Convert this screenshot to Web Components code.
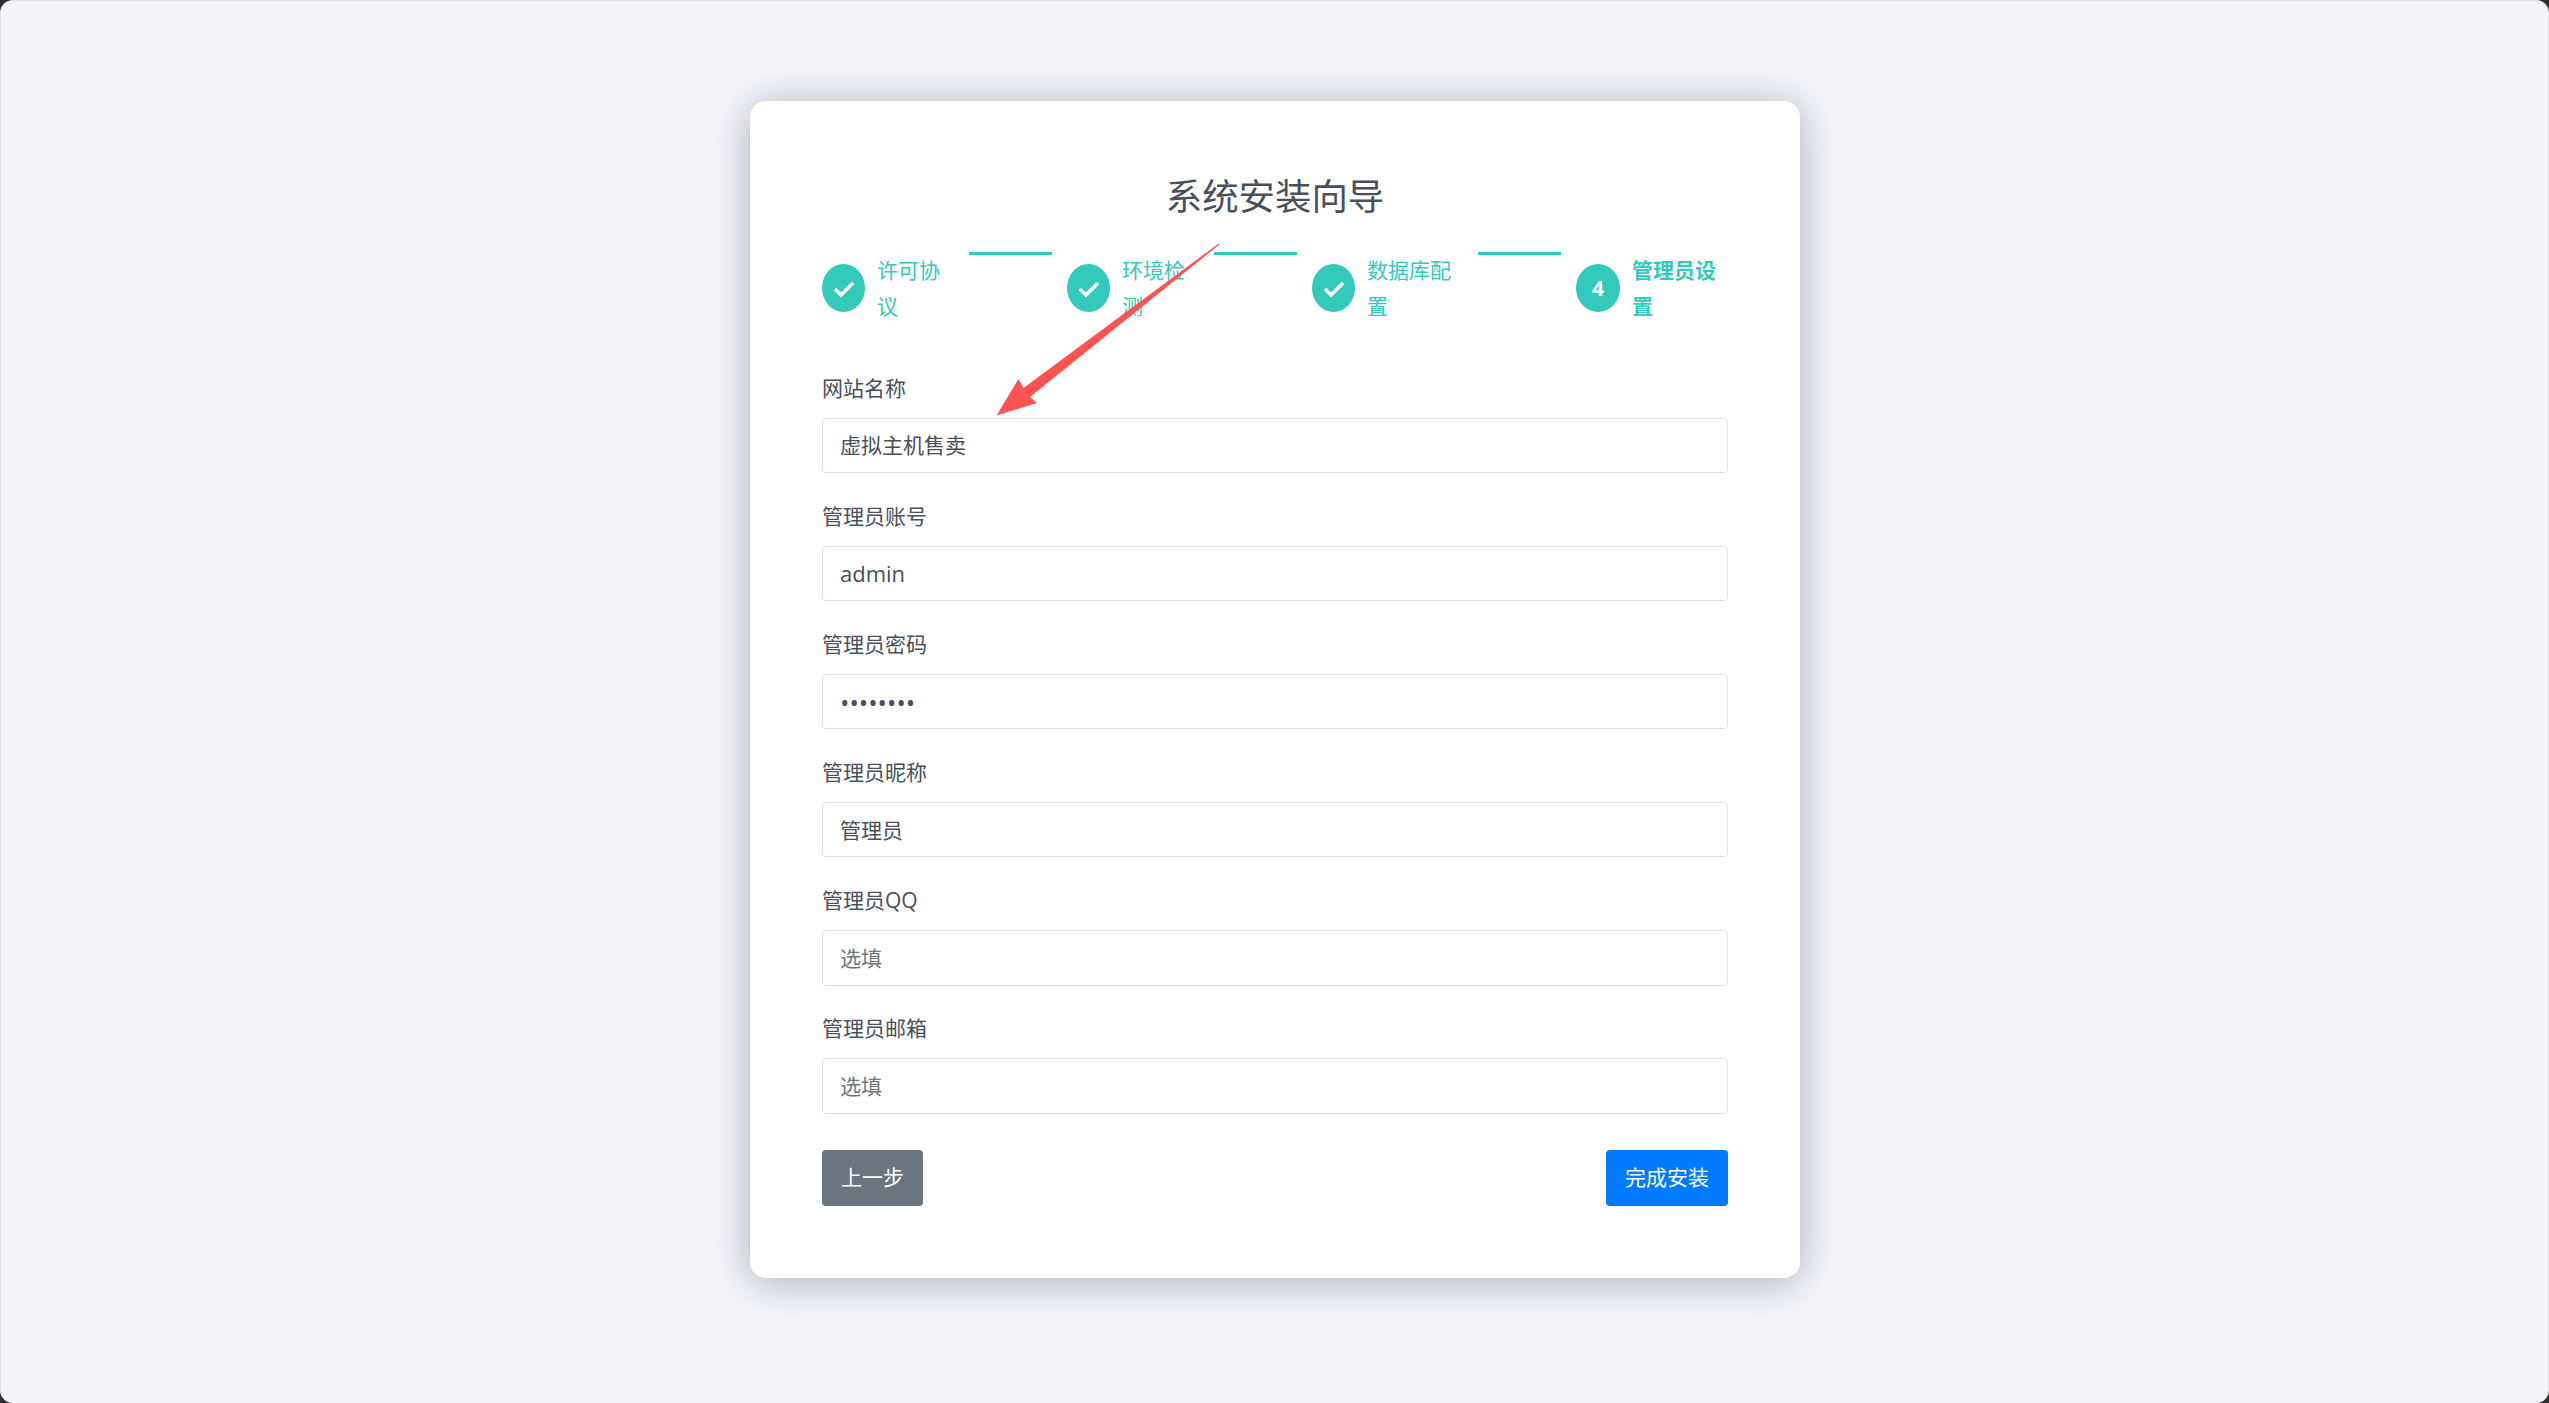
<!DOCTYPE html>
<html lang="zh-CN">
<head>
<meta charset="utf-8">
<title>系统安装向导</title>
<style>
  html, body { margin: 0; padding: 0; height: 100%; background: #2f2f2f; overflow: hidden; }
  body { font-family: "Open Sans", "Noto Sans CJK SC", sans-serif; color: #495057; }
</style>
</head>
<body>
<install-page>
  <wizard-card heading="系统安装向导">
    <wizard-steps>
      <wizard-step done text-width="70">许可协议</wizard-step>
      <wizard-link></wizard-link>
      <wizard-step done text-width="70">环境检测</wizard-step>
      <wizard-link></wizard-link>
      <wizard-step done text-width="91" style="flex-basis:166px">数据库配置</wizard-step>
      <wizard-link></wizard-link>
      <wizard-step number="4" text-width="91" style="flex-basis:152px">管理员设置</wizard-step>
    </wizard-steps>
    <form-field label="网站名称">虚拟主机售卖</form-field>
    <form-field label="管理员账号" kind="latin">admin</form-field>
    <form-field label="管理员密码" kind="password">••••••••</form-field>
    <form-field label="管理员昵称">管理员</form-field>
    <form-field label="管理员QQ" kind="placeholder">选填</form-field>
    <form-field label="管理员邮箱" kind="placeholder">选填</form-field>
    <wizard-actions>
      <action-button tone="secondary" style="width:101px">上一步</action-button>
      <action-button tone="primary" style="width:122px">完成安装</action-button>
    </wizard-actions>
  </wizard-card>
  <annotation-arrow></annotation-arrow>
</install-page>

<script>
  const shadow = (el, html) => { el.attachShadow({ mode: 'open' }).innerHTML = html; };

  class InstallPage extends HTMLElement {
    constructor() {
      super();
      shadow(this, `<style>
        :host { display: flex; justify-content: center; align-items: flex-start; position: relative;
          box-sizing: border-box; width: 100%; height: 100vh; padding: 100px 0 0 0;
          background: #f3f5fa; border: 1px solid #e1e3e9; border-bottom: 0; border-radius: 13px; }
      </style><slot></slot>`);
    }
  }

  class WizardCard extends HTMLElement {
    constructor() {
      super();
      shadow(this, `<style>
        :host { display: block; box-sizing: border-box; width: 1050px; height: 1177px; margin-left: 1px;
          padding: 70px 72px 72px; background: #fff; border-radius: 16px;
          box-shadow: 0 4px 42px rgba(20, 24, 40, .32); }
        h1 { margin: 0 0 31px; font-size: 36.4px; line-height: 50px; font-weight: 400; text-align: center; color: #495057; }
      </style><h1>${this.getAttribute('heading')}</h1><slot></slot>`);
    }
  }

  class WizardSteps extends HTMLElement {
    constructor() {
      super();
      shadow(this, `<style>
        :host { display: flex; align-items: flex-start; margin-bottom: 47.5px; }
      </style><slot></slot>`);
    }
  }

  class WizardStep extends HTMLElement {
    constructor() {
      super();
      const done = this.hasAttribute('done');
      const num = this.getAttribute('number');
      const w = this.getAttribute('text-width');
      const mark = done
        ? `<svg width="43" height="48" viewBox="0 0 43 48" aria-hidden="true"><polyline points="13,25 19,31 31,19" fill="none" stroke="#fff" stroke-width="3.6"/></svg>`
        : `<b>${num}</b>`;
      shadow(this, `<style>
        :host { display: flex; flex: 0 0 147px; align-items: center; gap: 12px; box-sizing: border-box; color: #33cabb; }
        .dot { flex: 0 0 ${done ? 43 : 44}px; height: 48px; border-radius: 50%; background: #33cabb; color: #fff;
          display: flex; align-items: center; justify-content: center; }
        .dot svg { display: block; }
        .dot b { font-size: 21px; font-weight: 700; }
        .text { width: ${w}px; font-size: 21px; line-height: 36px; font-weight: ${done ? 400 : 700}; }
      </style><span class="dot">${mark}</span><span class="text"><slot></slot></span>`);
    }
  }

  class WizardLink extends HTMLElement {
    constructor() {
      super();
      shadow(this, `<style>
        :host { display: block; flex: 0 0 83px; height: 3px; margin-right: 15px; background: #33cabb; }
      </style>`);
    }
  }

  class FormField extends HTMLElement {
    constructor() {
      super();
      const kind = this.getAttribute('kind') || 'text';
      shadow(this, `<style>
        :host { display: block; margin-bottom: 26.8px; }
        label { display: block; font-size: 21px; line-height: 33px; margin: 0 0 13px; color: #495057; }
        .box { box-sizing: border-box; height: 55.4px; padding: 0 17px 2px; display: flex; align-items: center;
          border: 1.5px solid #e0e1e7; border-radius: 4px; background: #fff; font-size: 21px; color: #495057; }
        .placeholder { color: #6c757d; }
        .latin { font-size: 22px; padding-bottom: 0; }
        .password { font-size: 25px; padding-bottom: 0; }
      </style><label>${this.getAttribute('label')}</label>
      <div class="box ${kind}" role="textbox"><slot></slot></div>`);
    }
  }

  class WizardActions extends HTMLElement {
    constructor() {
      super();
      shadow(this, `<style>
        :host { display: flex; justify-content: space-between; margin-top: 36.1px; }
      </style><slot></slot>`);
    }
  }

  class ActionButton extends HTMLElement {
    constructor() {
      super();
      const bg = this.getAttribute('tone') === 'primary' ? '#007bff' : '#6c757d';
      shadow(this, `<style>
        :host { display: flex; align-items: center; justify-content: center; box-sizing: border-box; height: 56px;
          padding-bottom: 4px; border-radius: 4px; background: ${bg}; color: #fff; font-size: 21px; }
      </style><slot></slot>`);
    }
  }

  class AnnotationArrow extends HTMLElement {
    constructor() {
      super();
      shadow(this, `<style>
        :host { position: absolute; left: -1px; top: -1px; width: 2549px; height: 1403px; pointer-events: none; }
        svg { display: block; }
      </style><svg width="2549" height="1403" viewBox="0 0 2549 1403" aria-hidden="true">
        <polygon fill="#ff5353" points="1220,244 1030,397 1037,403 996.5,415.5 1018.5,379 1023.5,388 1218,244"/>
      </svg>`);
    }
  }

  customElements.define('install-page', InstallPage);
  customElements.define('wizard-card', WizardCard);
  customElements.define('wizard-steps', WizardSteps);
  customElements.define('wizard-step', WizardStep);
  customElements.define('wizard-link', WizardLink);
  customElements.define('form-field', FormField);
  customElements.define('wizard-actions', WizardActions);
  customElements.define('action-button', ActionButton);
  customElements.define('annotation-arrow', AnnotationArrow);
</script>
</body>
</html>
